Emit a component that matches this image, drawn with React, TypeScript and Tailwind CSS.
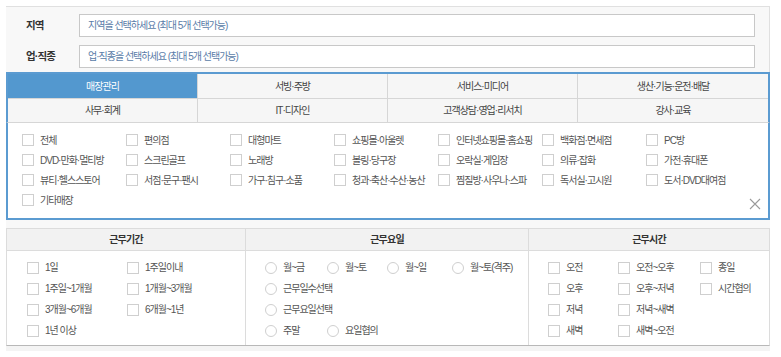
import React from 'react'

const font = { fontFamily: '"Liberation Sans", "Noto Sans CJK KR", sans-serif' }

const tabs = ['매장관리', '서빙·주방', '서비스·미디어', '생산·기능·운전·배달', '사무·회계', 'IT·디자인', '고객상담·영업·리서치', '강사·교육']

const shops = [
  '전체', '편의점', '대형마트', '쇼핑몰·아울렛', '인터넷쇼핑몰·홈쇼핑', '백화점·면세점', 'PC방',
  'DVD·만화·멀티방', '스크린골프', '노래방', '볼링·당구장', '오락실·게임장', '의류·잡화', '가전·휴대폰',
  '뷰티·헬스스토어', '서점·문구·팬시', '가구·침구·소품', '청과·축산·수산·농산', '찜질방·사우나·스파', '독서실·고시원', '도서·DVD대여점',
  '기타매장',
]

function Check({ label }: { label: string }) {
  return (
    <div className="flex items-center gap-[6px] h-[20px]">
      <span className="w-[12px] h-[12px] border border-[#cfcfcf] bg-white shrink-0" />
      <span className="text-[10px] text-[#555] tracking-[-0.1em] whitespace-nowrap">{label}</span>
    </div>
  )
}

function Radio({ label }: { label: string }) {
  return (
    <div className="flex items-center gap-[6px] h-[21px]">
      <span className="w-[12px] h-[12px] rounded-full border border-[#cfcfcf] bg-white shrink-0" />
      <span className="text-[10px] text-[#555] tracking-[-0.1em] whitespace-nowrap">{label}</span>
    </div>
  )
}

export default function App() {
  return (
    <div className="w-[781px] h-[357px] bg-white pl-[6px] pt-[6px]" style={font}>
      <div className="w-[764px]">
        {/* 지역 / 업직종 */}
        <div className="bg-[#f8f8f8] border-t border-r border-[#e0e0e0] pt-[7px] pb-[4px] flex flex-col gap-[8px]">
          {[
            ['지역', '지역을 선택하세요 (최대 5개 선택가능)'],
            ['업·직종', '업·직종을 선택하세요 (최대 5개 선택가능)'],
          ].map(([label, ph]) => (
            <div key={label} className="flex items-center">
              <div className="w-[73px] pl-[20px] text-[10.5px] font-bold text-[#333] tracking-[-0.08em]">{label}</div>
              <div className="w-[676px] h-[23px] border border-[#c8c8c8] bg-white flex items-center pl-[8px] text-[10px] text-[#5a7ca8] tracking-[-0.1em]">
                {ph}
              </div>
            </div>
          ))}
        </div>

        {/* 탭 */}
        <div className="border-2 border-b-0 border-[#5b9bd1] bg-[#f8f8f8]">
          <div className="grid grid-cols-4">
            {tabs.map((t, i) => (
              <div
                key={t}
                className={`flex items-center justify-center text-[10px] tracking-[-0.1em] border-[#d6d6d6] ${
                  i < 4 ? 'h-[24px]' : 'h-[24px] border-t'
                } ${i % 4 !== 3 ? 'border-r' : ''} ${i === 0 ? 'bg-[#5398cf] text-white border-[#5398cf]' : 'bg-[#f6f6f6] text-[#444]'}`}
              >
                {t}
              </div>
            ))}
          </div>
        </div>

        {/* 매장 체크박스 */}
        <div className="relative bg-white border-2 border-t border-[#5b9bd1] border-t-[#d6d6d6] pl-[14px] pt-[7px] pb-[8px]">
          <div className="grid grid-cols-[repeat(7,104px)]">
            {shops.map((s) => (
              <Check key={s} label={s} />
            ))}
          </div>
          <svg className="absolute right-[7px] bottom-[8px]" width="12" height="12" viewBox="0 0 12 12">
            <path d="M1 1L11 11M11 1L1 11" stroke="#9a9a9a" strokeWidth="1.1" />
          </svg>
        </div>

        <div className="h-[8px] bg-[#f8f8f8]" />

        {/* 근무 조건 */}
        <div className="grid grid-cols-[239px_283px_1fr] grid-rows-[22px_94px] border-t border-[#dcdcdc] border-b border-b-[#b8b8b8] border-l border-r border-l-[#dcdcdc] border-r-[#dcdcdc]">
          {['근무기간', '근무요일', '근무시간'].map((h, i) => (
            <div
              key={h}
              className={`bg-[#f2f2f2] border-b border-[#dcdcdc] flex items-center justify-center text-[10px] font-bold text-[#333] tracking-[-0.08em] ${i < 2 ? 'border-r' : ''}`}
            >
              {h}
            </div>
          ))}

          <div className="border-r border-[#dcdcdc] pl-[20px] pt-[6px] grid grid-cols-[100px_100px] auto-rows-[21px] content-start">
            {['1일', '1주일이내', '1주일~1개월', '1개월~3개월', '3개월~6개월', '6개월~1년', '1년 이상'].map((s) => (
              <div key={s} className="h-[21px] flex items-center">
                <Check label={s} />
              </div>
            ))}
          </div>

          <div className="border-r border-[#dcdcdc] pl-[19px] pt-[6px] flex flex-col">
            <div className="flex">
              <div className="w-[62px]"><Radio label="월~금" /></div>
              <div className="w-[60px]"><Radio label="월~토" /></div>
              <div className="w-[65px]"><Radio label="월~일" /></div>
              <Radio label="월~토(격주)" />
            </div>
            <Radio label="근무일수선택" />
            <Radio label="근무요일선택" />
            <div className="flex">
              <div className="w-[62px]"><Radio label="주말" /></div>
              <Radio label="요일협의" />
            </div>
          </div>

          <div className="pl-[19px] pt-[6px] grid grid-cols-[70px_82px_1fr] auto-rows-[21px] content-start">
            {['오전', '오전~오후', '종일', '오후', '오후~저녁', '시간협의', '저녁', '저녁~새벽', '', '새벽', '새벽~오전'].map((s, i) =>
              s ? (
                <div key={i} className="h-[21px] flex items-center">
                  <Check label={s} />
                </div>
              ) : (
                <div key={i} />
              )
            )}
          </div>
        </div>
        <div className="h-[5px] bg-[#f4f4f4]" />
      </div>
    </div>
  )
}
